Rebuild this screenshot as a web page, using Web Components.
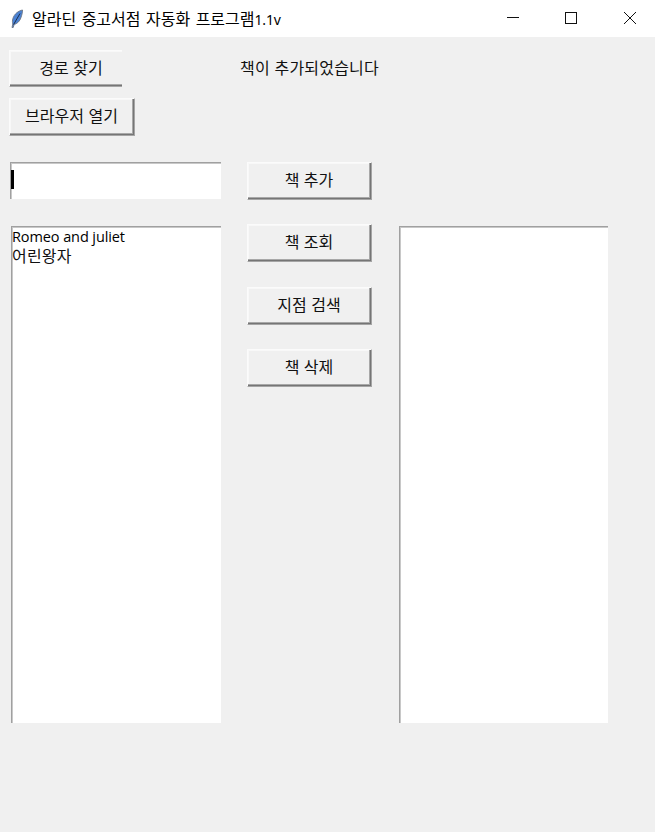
<!DOCTYPE html>
<html lang="ko"><head><meta charset="utf-8"><title>알라딘 중고서점 자동화 프로그램1.1v</title>
<style>html,body{margin:0;padding:0;background:#f0f0f0}body{font-family:"Noto Sans CJK KR","Noto Sans",sans-serif}</style></head>
<body>
<app-window>
  <title-bar slot="title">알라딘 중고서점 자동화 프로그램<span style="font:14px 'Noto Sans',sans-serif;letter-spacing:-.2px">1.1v</span></title-bar>
  <tk-button style="--w:113px" open>경로 찾기</tk-button>
  <span slot="status">책이 추가되었습니다</span>
  <tk-button slot="browser" style="--w:126px">브라우저 열기</tk-button>
  <tk-entry slot="entry"></tk-entry>
  <tk-listbox slot="list1" style="--w:210px"><div style="font:14.5px/19px 'Open Sans',sans-serif;letter-spacing:-.1px;color:#000">Romeo and juliet</div><div style="line-height:19px;letter-spacing:.2px">어린왕자</div></tk-listbox>
  <tk-button slot="actions" style="--w:125px">책 추가</tk-button>
  <tk-button slot="actions" style="--w:125px;margin-top:24px">책 조회</tk-button>
  <tk-button slot="actions" style="--w:125px;margin-top:25px">지점 검색</tk-button>
  <tk-button slot="actions" style="--w:125px;margin-top:24px">책 삭제</tk-button>
  <tk-listbox slot="list2" style="--w:209px"></tk-listbox>
</app-window>
<script>
const def=(n,html)=>customElements.define(n,class extends HTMLElement{constructor(){super();this.attachShadow({mode:"open"}).innerHTML=html;}});
def("title-bar",`<style>:host{display:flex;align-items:center;height:37px;background:#fff;color:#000;font:16px/20px "Noto Sans CJK KR","Noto Sans",sans-serif;box-sizing:border-box}
.ic{width:16px;height:20px;margin-left:9px;margin-right:7px;flex:none;display:block}
.t{flex:1;white-space:nowrap;margin-top:-1px;word-spacing:1px}
.c{display:flex}.c svg{display:block;height:37px}</style>
<svg class="ic" viewBox="0 0 16 20"><path d="M13.5 1C9.5 1.8 5.2 5 3.9 9.5 3.3 11.5 3.3 13.2 3.8 15L3 18.5h1.2L5.2 15.5C8.5 14.6 10.8 12 11.9 8.8 12.8 6.2 13.5 3.6 13.5 1Z" fill="#4a82d4" stroke="#6a7484" stroke-width=".9"/><path d="M11 4.5 4.6 15.5" stroke="#16243c" stroke-width=".9" fill="none"/></svg>
<span class="t"><slot></slot></span>
<div class="c">
<svg width="58" viewBox="0 0 58 37"><path d="M23 17.5h12" stroke="#111"/></svg>
<svg width="58" viewBox="0 0 58 37"><rect x="23.5" y="12.5" width="11" height="11" fill="none" stroke="#111"/></svg>
<svg width="55" viewBox="0 0 55 37"><path d="M24 12l12 12M36 12 24 24" stroke="#111" fill="none"/></svg>
</div>`);
def("tk-button",`<style>:host{display:block;width:var(--w);height:38px;box-sizing:border-box;background:#f0f0f0;border-style:solid;border-width:1px;border-color:#fbfbfb #a5a5a5 #a5a5a5 #fbfbfb;box-shadow:inset -1px -1px 0 0 #757575,inset -2px -2px 0 0 #a8a8a8,inset 1px 1px 0 0 #f8f8f8;font:16px/1 "Noto Sans CJK KR","Noto Sans",sans-serif;color:#111;overflow:hidden}
:host([open]){height:37px;border-right:0;box-shadow:inset 0 -1px 0 0 #757575,inset 0 -2px 0 0 #a8a8a8,inset 1px 1px 0 0 #f8f8f8}
div{display:flex;height:100%;align-items:center;justify-content:center;white-space:nowrap;padding-bottom:4px;box-sizing:border-box}
:host([open]) div{width:122px}:host(:not([open])) div{padding-right:1px}</style><div><slot></slot></div>`);
def("tk-entry",`<style>:host{display:block;width:211px;height:37px;margin-left:1px;box-sizing:border-box;background:#fff;border-top:1px solid #a0a0a0;border-left:1px solid #a0a0a0;box-shadow:inset 1px 1px 0 0 #c8c8c8}
i{display:block;width:3px;height:19px;margin:7px 0 0 0;background:#000}</style><i></i>`);
def("tk-listbox",`<style>:host{display:block;width:var(--w);height:497px;box-sizing:border-box;background:#fff;border-top:1px solid #a0a0a0;border-left:1px solid #a0a0a0;box-shadow:inset 1px 1px 0 0 #c8c8c8;font:16px/20px "Noto Sans CJK KR","Noto Sans",sans-serif;color:#111;overflow:hidden}
</style><slot></slot>`);
def("app-window",`<style>:host{display:block;width:655px;height:832px;background:#f0f0f0;font:16px "Noto Sans CJK KR","Noto Sans",sans-serif;color:#111}
main{padding:13px 0 0 9px}
.r1{display:flex;align-items:center}
.status{margin-left:118px;margin-top:-3px;white-space:nowrap;letter-spacing:.2px}
.r2{margin-top:11px}
.g{display:grid;grid-template-columns:238px 152px 1fr;grid-template-rows:37px auto;margin-top:26px}
.e{grid-column:1;grid-row:1}
.l1{grid-column:1;grid-row:2;margin:27px 0 0 2px}
.a{grid-column:2;grid-row:1/3}
.l2{grid-column:3;grid-row:2;margin-top:27px}</style>
<slot name="title"></slot>
<main>
<div class="r1"><slot></slot><div class="status"><slot name="status"></slot></div></div>
<div class="r2"><slot name="browser"></slot></div>
<div class="g"><div class="e"><slot name="entry"></slot></div><div class="l1"><slot name="list1"></slot></div><div class="a"><slot name="actions"></slot></div><div class="l2"><slot name="list2"></slot></div></div>
</main>`);
</script>
</body></html>
